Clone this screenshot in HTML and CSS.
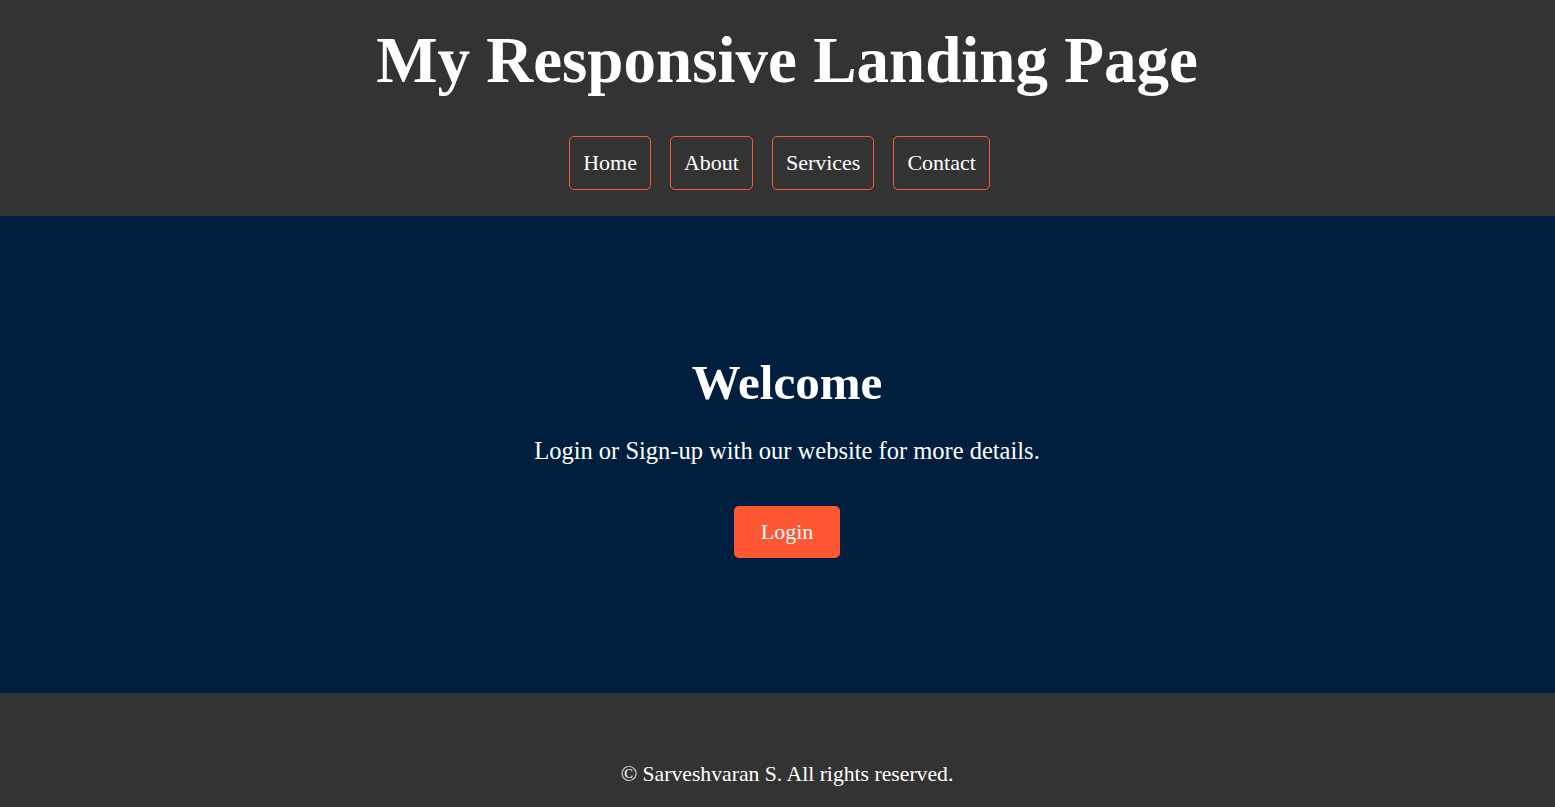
FILE: index.html
```html
<!DOCTYPE html>
<html lang="en">
<head>
<meta charset="utf-8">
<title>My Responsive Landing Page</title>
<link rel="stylesheet" href="styles.css">
</head>
<body>
<header class="site-header">
  <h1 class="site-title">My Responsive Landing Page</h1>
  <nav class="site-nav">
    <a class="nav-link" href="#">Home</a>
    <a class="nav-link" href="#">About</a>
    <a class="nav-link" href="#">Services</a>
    <a class="nav-link" href="#">Contact</a>
  </nav>
</header>
<section class="hero">
  <h2 class="hero-title">Welcome</h2>
  <p class="hero-text">Login or Sign-up with our website for more details.</p>
  <a class="btn" href="#">Login</a>
</section>
<footer class="site-footer">
  <p class="footer-text">&copy; Sarveshvaran S. All rights reserved.</p>
</footer>
</body>
</html>
```
FILE: styles.css
```css
html, body {
  margin: 0;
  padding: 0;
}
body {
  font-family: "Liberation Serif", "Times New Roman", serif;
  color: #fff;
  background: #333;
}
.site-header {
  background: #333;
  text-align: center;
  padding: 23px 0 26px 19px;
}
.site-title {
  margin: 0 0 38px;
  font-size: 65px;
  font-weight: bold;
  line-height: normal;
}
.site-nav {
  display: flex;
  justify-content: center;
  gap: 19px;
  padding-right: 15px;
}
.nav-link {
  color: #fff;
  text-decoration: none;
  font-size: 22px;
  padding: 13px 13px;
  border: 1px solid #ff5733;
  border-radius: 5px;
}
.hero {
  background: #001f3f;
  text-align: center;
  height: 477px;
  box-sizing: border-box;
  padding: 138px 0 0 19px;
}
.hero-title {
  margin: 0;
  font-size: 49px;
  font-weight: bold;
  line-height: normal;
}
.hero-text {
  margin: 26px 0 41px;
  font-size: 24.5px;
  line-height: normal;
}
.btn {
  display: inline-block;
  background: #ff5733;
  color: #fff;
  text-decoration: none;
  font-size: 22px;
  padding: 13px 27px;
  border-radius: 5px;
}
.site-footer {
  background: #333;
  text-align: center;
  padding: 69px 0 30px 19px;
}
.footer-text {
  margin: 0;
  font-size: 21.7px;
  line-height: normal;
}
```
